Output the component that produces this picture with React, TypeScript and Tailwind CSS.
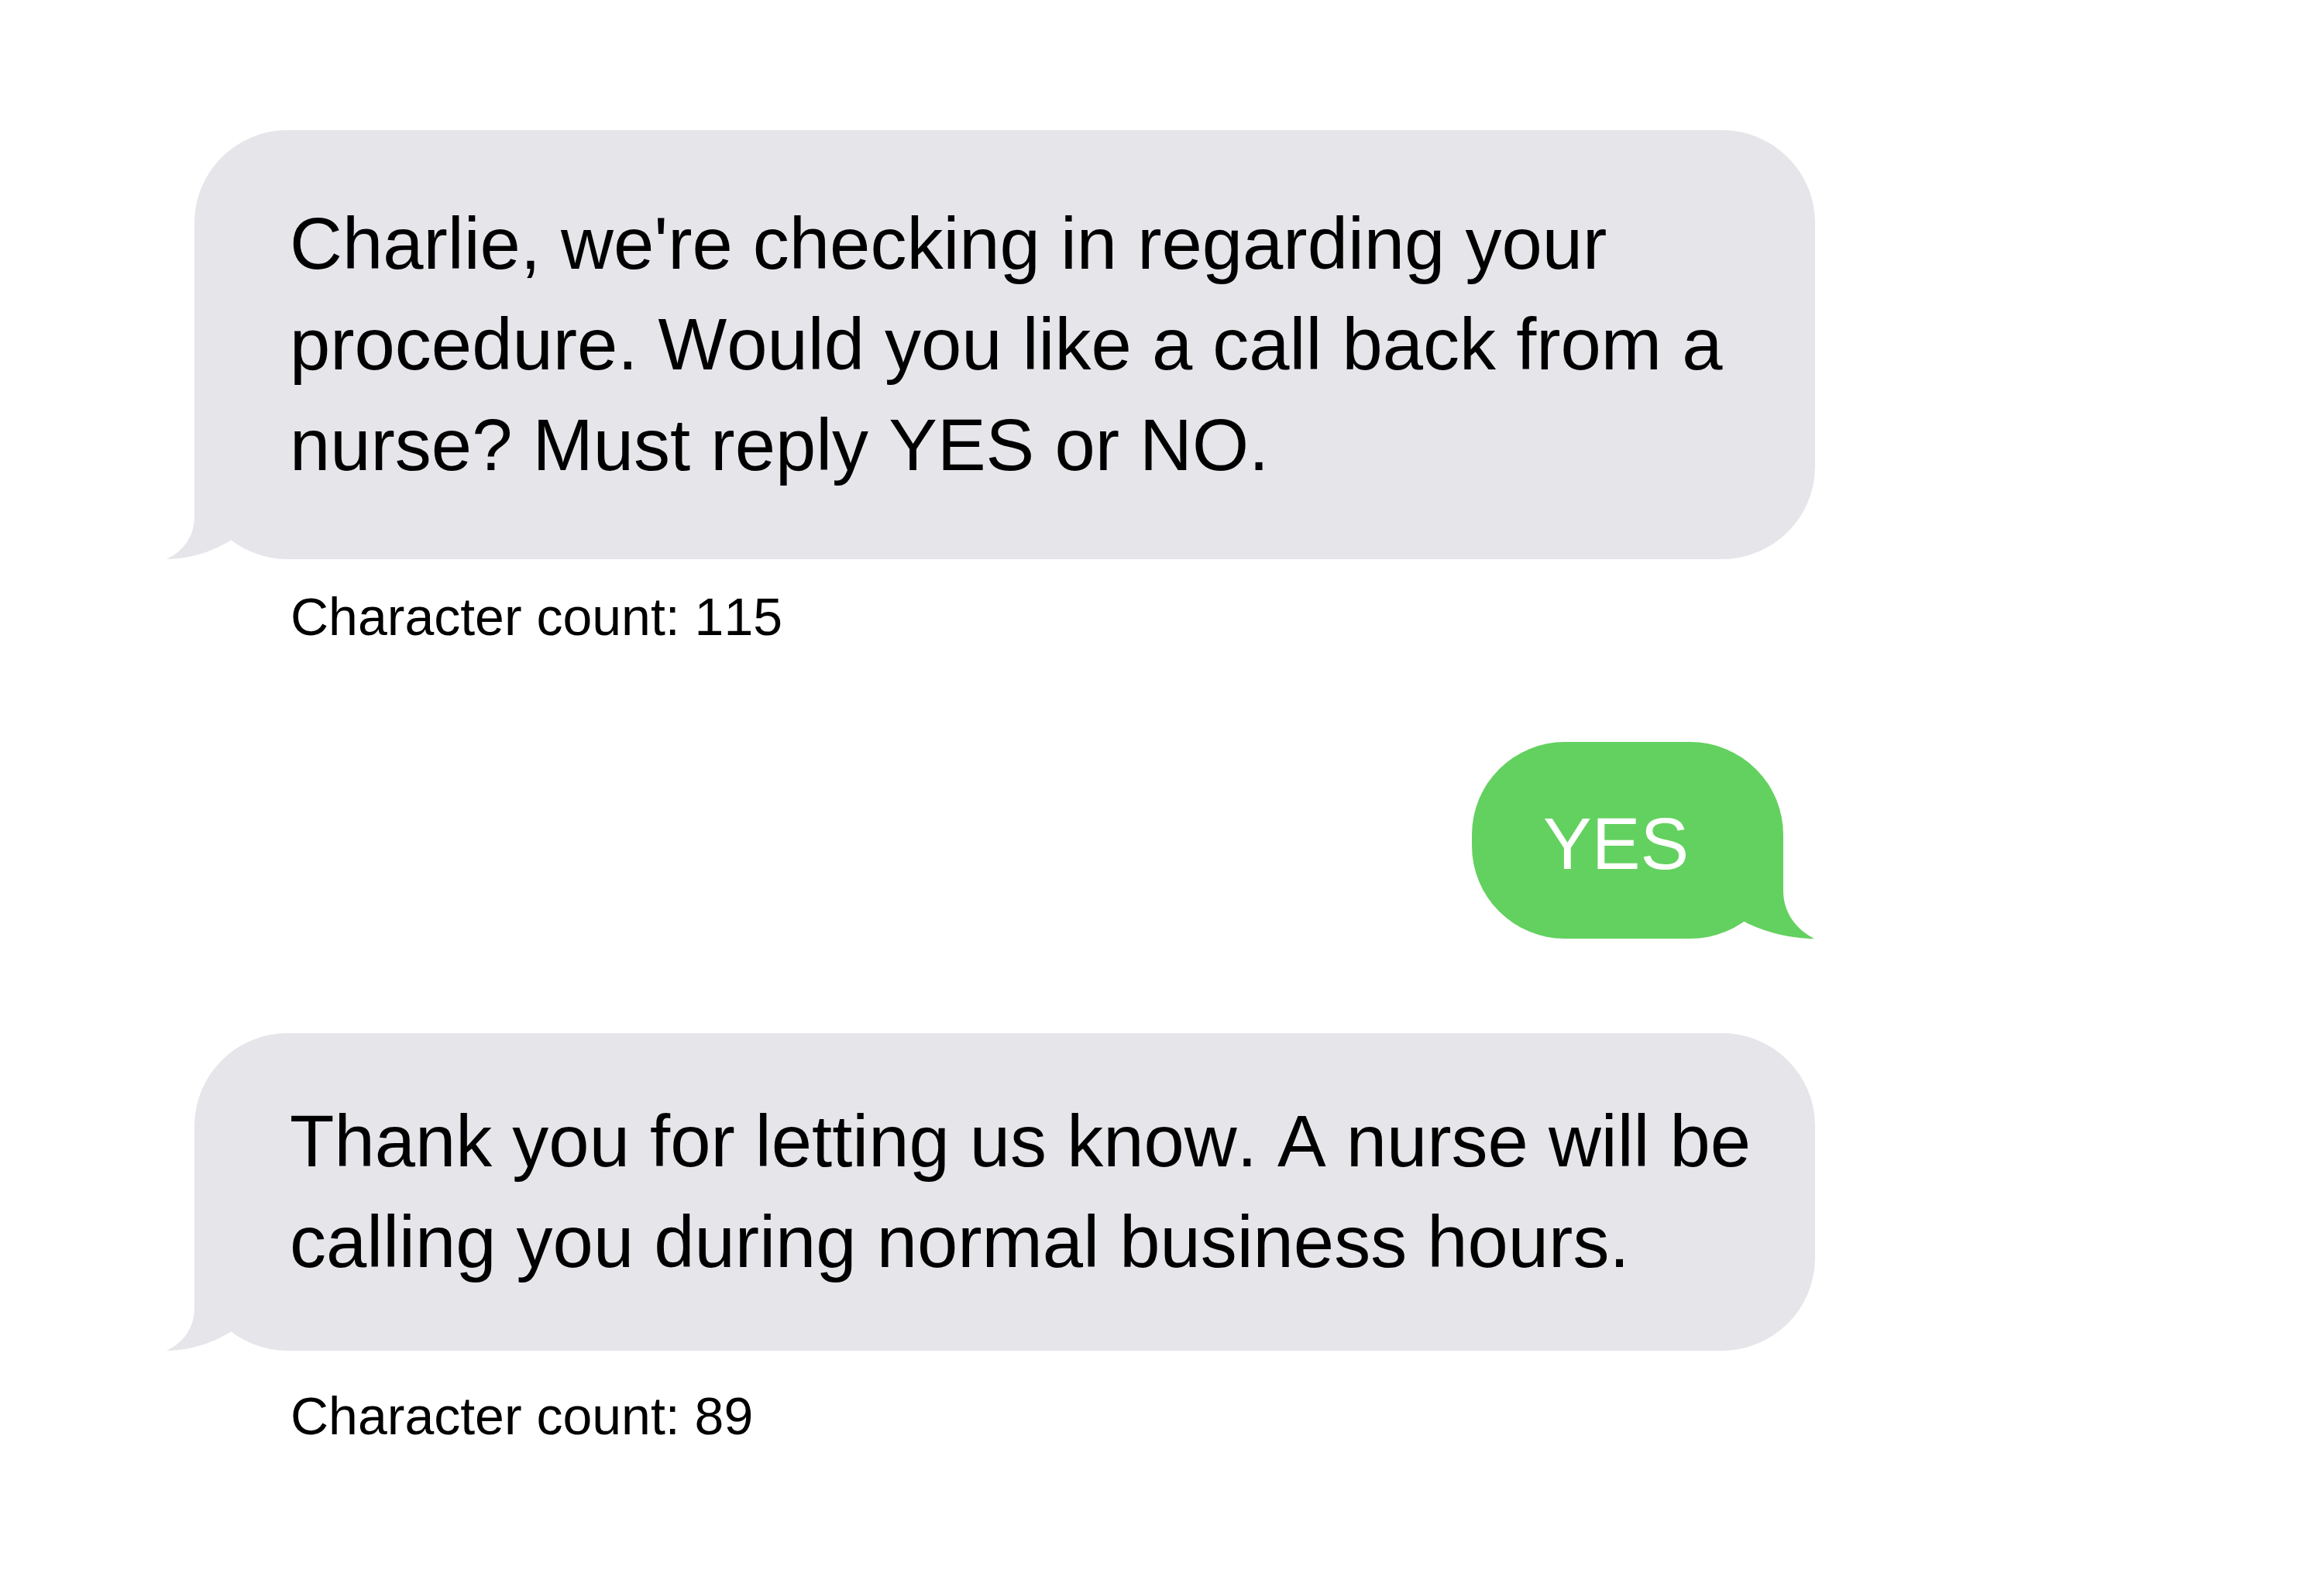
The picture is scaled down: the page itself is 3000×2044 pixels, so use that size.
const GRAY = "#E5E5EA";
const GREEN = "#63D15F";

function IncomingTail() {
  return (
    <svg
      className="absolute left-[-36px] bottom-0"
      width="90"
      height="125"
      viewBox="0 0 90 125"
      aria-hidden="true"
    >
      <path d="M36,0 L36,69 C36,93 25,113 0,125 C25,125 60,117 88,97 L88,0 Z" fill={GRAY} />
    </svg>
  );
}

function OutgoingTail() {
  return (
    <svg
      className="absolute right-[-40px] bottom-0"
      width="95"
      height="125"
      viewBox="0 0 95 125"
      aria-hidden="true"
    >
      <path d="M55,0 L55,63 C55,90 70,112 95,125 C70,125 30,118 1,101 L1,0 Z" fill={GREEN} />
    </svg>
  );
}

function Incoming({ lines, pad }: { lines: string[]; pad: string }) {
  return (
    <div className={`relative rounded-[120px] bg-[#E5E5EA] pl-[123px] ${pad}`}>
      <IncomingTail />
      <div className="relative text-[94px] leading-[130px] text-black whitespace-nowrap">
        {lines.map((l) => (
          <div key={l}>{l}</div>
        ))}
      </div>
    </div>
  );
}

export default function App() {
  return (
    <div
      className="min-h-screen bg-white [font-kerning:none]"
      style={{ fontFamily: "'Liberation Sans', Arial, sans-serif" }}
    >
      <div className="ml-[251px] w-[2092px] pt-[168px] flex flex-col">
        <Incoming
          pad="py-[82px]"
          lines={[
            "Charlie, we're checking in regarding your",
            "procedure. Would you like a call back from a",
            "nurse? Must reply YES or NO.",
          ]}
        />
        <div className="mt-[41px] ml-[124px] text-[68px] leading-[67px] text-black">
          Character count: 115
        </div>

        {/* reply */}
        <div className="mt-[128px] self-end mr-[41px]">
          <div className="relative w-[402px] h-[254px] rounded-[120px] bg-[#63D15F] pl-[92px] pt-[67px]">
            <OutgoingTail />
            <div className="relative text-[94px] leading-[130px] text-white">YES</div>
          </div>
        </div>

        <div className="mt-[122px]">
          <Incoming
            pad="py-[75px]"
            lines={[
              "Thank you for letting us know. A nurse will be",
              "calling you during normal business hours.",
            ]}
          />
        </div>
        <div className="mt-[51px] ml-[124px] text-[68px] leading-[67px] text-black">
          Character count: 89
        </div>
      </div>
    </div>
  );
}
